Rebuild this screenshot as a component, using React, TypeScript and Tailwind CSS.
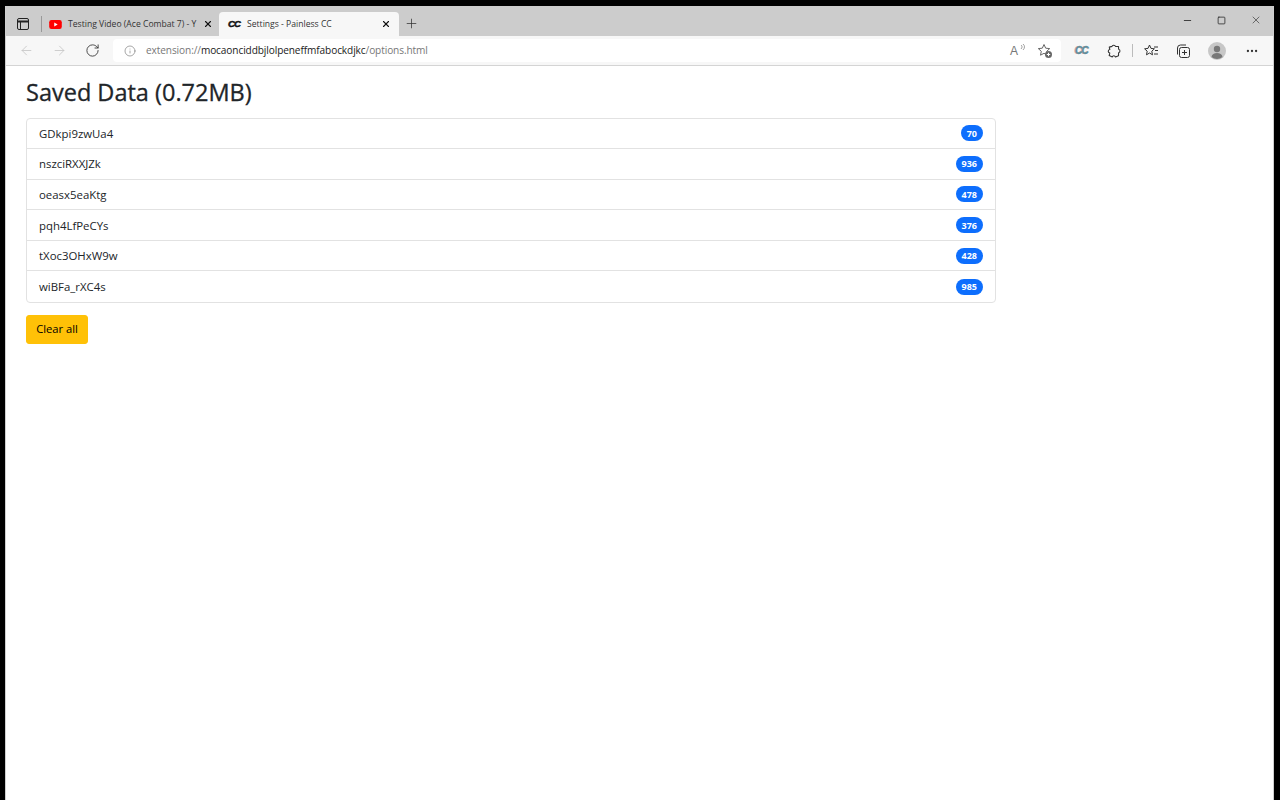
import React from "react";
import { ArrowLeft, ArrowRight, RotateCw, Info, Plus, X, Minus, Square, MoreHorizontal } from "lucide-react";

const FONT = "font-['Open_Sans','Noto_Sans',sans-serif]";

const rows = [
  { id: "GDkpi9zwUa4", count: 70 },
  { id: "nszciRXXJZk", count: 936 },
  { id: "oeasx5eaKtg", count: 478 },
  { id: "pqh4LfPeCYs", count: 376 },
  { id: "tXoc3OHxW9w", count: 428 },
  { id: "wiBFa_rXC4s", count: 985 },
];

const YoutubeIcon = () => (
  <svg width="13" height="9" viewBox="0 0 14 10" className="shrink-0">
    <rect width="14" height="10" rx="2.5" fill="#f00" />
    <path d="M5.6 2.8 9.4 5 5.6 7.2Z" fill="#fff" />
  </svg>
);

const SidebarIcon = () => (
  <svg width="12" height="12" viewBox="0 0 12 12" fill="none" stroke="#222" className="shrink-0">
    <rect x="0.5" y="0.5" width="11" height="11" rx="1.5" />
    <path d="M0.5 3.5H11.5" strokeWidth="2" />
    <path d="M3.5 3.5V11.5" />
  </svg>
);

const ReadAloudIcon = () => (
  <span className="relative h-4 w-4 text-[12px] leading-4 text-[#777] font-['Liberation_Sans',sans-serif]">
    A
    <svg width="5" height="7" viewBox="0 0 5 7" fill="none" stroke="#888" className="absolute right-[1px] top-[1px]">
      <path d="M1 1c1.4 1 1.4 2.6 0 4M3 0c2 1.600 2 4 0 6" strokeWidth="0.8" />
    </svg>
  </span>
);

const StarPlusIcon = () => (
  <svg width="16" height="16" viewBox="0 0 16 16" fill="none" stroke="#666">
    <path d="M7 1.500 8.700 5.200l4 .4-3 2.700.8 3.900L7 10.300 3.500 12.200l.8-3.900-3-2.700 4-.4Z" strokeWidth="1" strokeLinejoin="round" />
    <circle cx="11.500" cy="11.500" r="3.500" fill="#666" stroke="none" />
    <path d="M11.500 9.800v3.400M9.800 11.500h3.400" stroke="#fff" />
  </svg>
);

// Edge draws its own extensions glyph, the lucide puzzle is too different
const ExtensionIcon = () => (
  <svg width="14" height="14" viewBox="0 0 14 14" fill="none" stroke="#333" strokeWidth="1.100" strokeLinejoin="round">
    <path d="M5 2.400C5.300 1 8 .7 8.500 2.400L11.500 2.500 11.600 5.300C13.400 5.500 13.400 8.500 11.600 8.700L11.500 11.800 8.500 12.900C7.700 11.200 5.700 11.400 5.300 12.900L2.200 11.600 2.800 9C.7 8.600.8 5.800 2.800 5.500L2.300 3.100Z" />
  </svg>
);

const FavoritesIcon = () => (
  <svg width="16" height="16" viewBox="0 0 16 16" fill="none" stroke="#333">
    <path d="M6.500 2 8 5.400l3.400.4-2.600 2.400.7 3.600-3-1.800-3 1.800.7-3.600L1.600 5.800 5 5.400Z" strokeLinejoin="round" />
    <path d="M11 4h4M12 7.500h3M11 11h4" />
  </svg>
);

const CollectionsIcon = () => (
  <svg width="16" height="16" viewBox="0 0 16 16" fill="none" stroke="#333">
    <rect x="4.500" y="4.500" width="10" height="10" rx="2" />
    <path d="M2.500 11.500V5a3 3 0 0 1 3-3h5.500" />
    <path d="M9.500 7v5M7 9.500h5" />
  </svg>
);

const ProfileIcon = () => (
  <svg width="18" height="18" viewBox="0 0 18 18">
    <circle cx="9" cy="9" r="9" fill="#c7c7c7" />
    <circle cx="9" cy="7" r="3.200" fill="#777" />
    <path d="M3.500 15c.5-3 2.700-4 5.500-4s5 1 5.500 4a8.500 8.500 0 0 1-11 0Z" fill="#777" />
  </svg>
);

const TabStrip = () => (
  <div className="flex h-[30px] items-end bg-[#cccccc] pl-[11px]">
    <div className="flex h-[24px] w-[24px] shrink-0 items-center">
      <SidebarIcon />
    </div>
    <div className="mb-[4px] h-[16px] w-px shrink-0 bg-[#999]" />
    <div className="flex h-[24px] w-[177px] shrink-0 items-center pl-[7px] pr-[6px]">
      <YoutubeIcon />
      <span className="ml-[6px] flex-1 whitespace-nowrap text-[8.6px] text-[#333]">Testing Video (Ace Combat 7) - Y</span>
      <X size={10} color="#111" strokeWidth={2.6} className="shrink-0" />
    </div>
    <div className="flex h-[24px] w-[180px] shrink-0 items-center rounded-t-[4px] bg-[#f7f7f7] pl-[9px] pr-[8px]">
      <span className="w-[19px] font-['Liberation_Sans',sans-serif] text-[9.5px] leading-none font-black tracking-[-0.8px] text-[#111] italic [-webkit-text-stroke:0.5px_#111]">CC</span>
      <span className="flex-1 whitespace-nowrap text-[8.6px] text-[#333]">Settings - Painless CC</span>
      <X size={10} color="#111" strokeWidth={2.6} className="shrink-0" />
    </div>
    <div className="mb-[1px] flex h-[24px] w-[25px] shrink-0 items-center justify-center">
      <Plus size={15} color="#333" strokeWidth={1.2} />
    </div>
    <div className="ml-auto flex h-[30px] items-center gap-[24px] pr-[11px] pb-[2px]">
      <Minus size={11} color="#333" />
      <Square size={9} color="#222" strokeWidth={2} />
      <X size={12} color="#333" strokeWidth={1.3} />
    </div>
  </div>
);

const Toolbar = () => (
  <div className="flex h-[30px] items-center border-b border-[#d4d4d4] bg-[#f7f7f7] pl-[13px]">
    <ArrowLeft size={15} color="#c4c4c4" strokeWidth={1.3} />
    <ArrowRight size={15} color="#c4c4c4" strokeWidth={1.3} className="ml-[18px]" />
    <RotateCw size={15} color="#333" strokeWidth={1.4} className="ml-[18px]" />
    <div className="ml-[13px] flex h-[23px] w-[948px] items-center rounded-[4px] bg-white pl-[11px] pr-[8px]">
      <Info size={12} color="#777" strokeWidth={1.3} />
      <span className="ml-[10px] whitespace-nowrap text-[10.1px] tracking-[-0.1px] text-[#777]">
        extension://<span className="text-[#1a1a1a]">mocaonciddbjlolpeneffmfabockdjkc</span>/options.html
      </span>
      <div className="ml-auto flex items-center gap-[11px]">
        <ReadAloudIcon />
        <StarPlusIcon />
      </div>
    </div>
    <div className="ml-[14px] flex items-center">
      <span className="w-[12px] font-['Liberation_Sans',sans-serif] text-[10px] leading-none font-black tracking-[-0.8px] text-[#5f8f9c] italic [-webkit-text-stroke:0.4px_#5f8f9c] [text-shadow:-1px_0_0_#e2a3a3]">CC</span>
      <div className="ml-[20px]"><ExtensionIcon /></div>
      <div className="ml-[11px] h-[13px] w-px bg-[#bbb]" />
      <div className="ml-[10px]"><FavoritesIcon /></div>
      <div className="ml-[16px]"><CollectionsIcon /></div>
      <div className="ml-[17px]"><ProfileIcon /></div>
      <MoreHorizontal size={14} color="#333" className="ml-[19px]" />
    </div>
  </div>
);

const SavedRow = ({ id, count }: { id: string; count: number }) => (
  <li className="flex h-[30.6px] items-center justify-between border-b border-[#e2e2e2] px-[12px] last:border-b-0">
    <span className="text-[11.4px] text-[#212529]">{id}</span>
    <span className="rounded-full bg-[#0d6efd] px-[6px] py-[2.500px] text-[9px] leading-[11px] font-bold text-white">{count}</span>
  </li>
);

export default function App() {
  return (
    <div className={`h-screen overflow-hidden bg-black pt-[6px] pl-[5px] pr-[6px] ${FONT}`}>
      <div className="flex h-full flex-col border-x border-[#cfcfcf] bg-white">
        <TabStrip />
        <Toolbar />
        <main className="pl-[20px] pt-[12px]">
          <h1 className="text-[23.5px] leading-[28px] font-medium text-[#212529] [-webkit-text-stroke:0.3px_#212529]">Saved Data (0.72MB)</h1>
          <ul className="mt-[11.5px] w-[970px] rounded-[4px] border border-[#e2e2e2]">
            {rows.map((row) => (
              <SavedRow key={row.id} id={row.id} count={row.count} />
            ))}
          </ul>
          <button className="mt-[11.5px] h-[29px] w-[62px] rounded-[3px] border border-[#ffc107] bg-[#ffc107] text-[11.2px] text-black">Clear all</button>
        </main>
      </div>
    </div>
  );
}
